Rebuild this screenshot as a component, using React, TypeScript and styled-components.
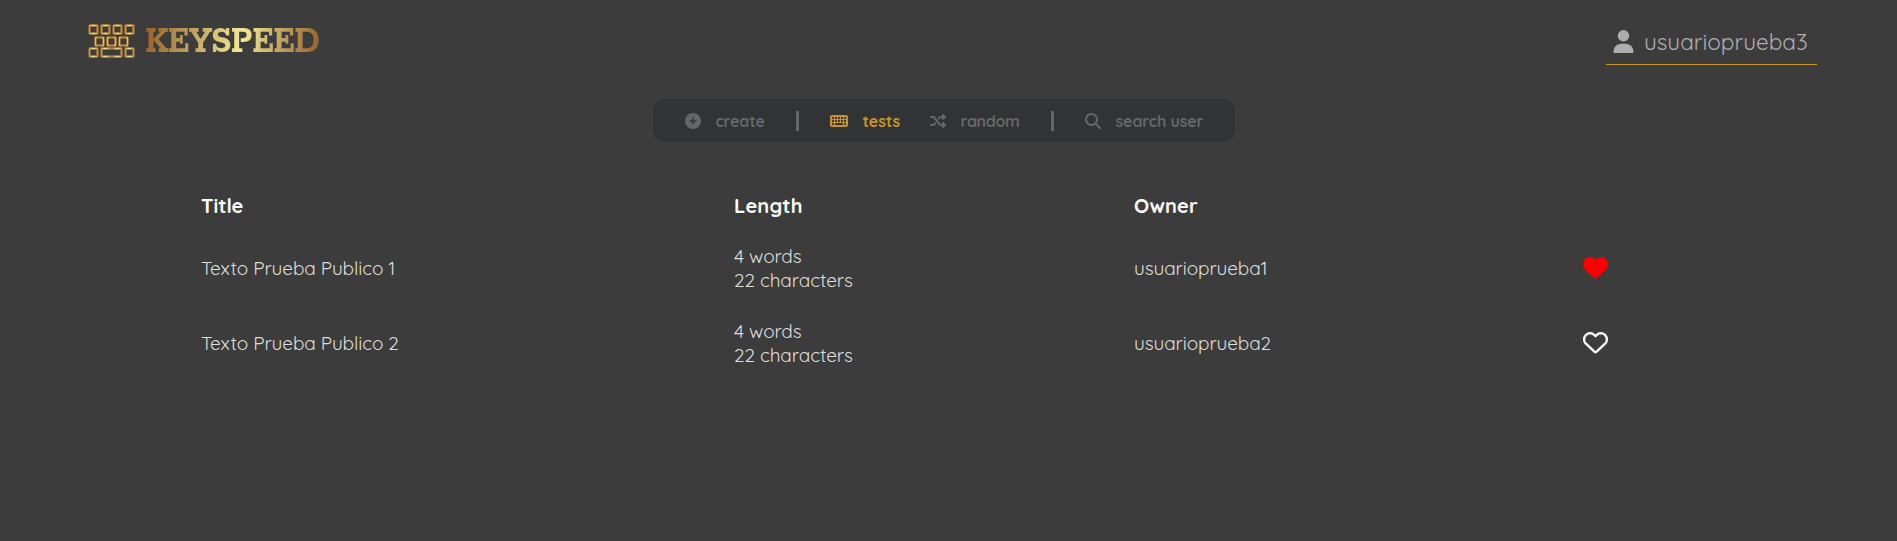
import React from "react";
import styled, { createGlobalStyle } from "styled-components";
import { FaCirclePlus, FaKeyboard, FaShuffle, FaMagnifyingGlass, FaUser, FaHeart, FaRegHeart } from "react-icons/fa6";

const GlobalStyle = createGlobalStyle`
  * { box-sizing: border-box; }
  body { margin: 0; background: #3c3c3c; font-family: Quicksand, Lato, "Open Sans", sans-serif; }
  svg { display: block; flex: none; }
`;

const Page = styled.div`
  min-height: 541px;
  overflow: hidden;
  background: #3c3c3c;
`;

const Header = styled.header`
  display: flex;
  justify-content: space-between;
  align-items: flex-start;
  height: 99px;
  padding: 17px 80px 0 88px;
`;

const Logo = styled.div`
  display: flex;
  align-items: center;
  gap: 9px;
  height: 48px;
`;

const LogoText = styled.span`
  margin-top: 4px;
  font: 700 36px/40px "Roboto Slab", Rokkitt, "Zilla Slab", "DejaVu Serif Condensed", "DejaVu Serif", serif;
  letter-spacing: -0.6px;
  transform: scaleY(1.14);
  color: transparent;
  background: linear-gradient(100deg, #99632c 2%, #c2a45e 28%, #f3e994 55%, #c2a45e 76%, #99632c 98%);
  background-clip: text;
  -webkit-background-clip: text;
`;

const UserLink = styled.div`
  display: flex;
  align-items: center;
  width: 211px;
  height: 48px;
  padding: 2px 0 0 6px;
  gap: 9px;
  border-bottom: 1px solid #c4942b;
  color: #adadad;
  font-size: 22.5px;
  line-height: 30px;
`;

const Label = styled.span<{ $spacing?: number }>`
  white-space: nowrap;
  letter-spacing: ${(p) => p.$spacing ?? 0}px;
`;

const Nav = styled.nav`
  display: flex;
  align-items: center;
  width: 582px;
  height: 43px;
  margin-left: 653px;
  padding-left: 32px;
  border-radius: 12px;
  background: #323335;
`;

const NavItem = styled.div<{ $width: number; $active?: boolean }>`
  display: flex;
  align-items: center;
  gap: 14.5px;
  flex: none;
  width: ${(p) => p.$width}px;
  color: ${(p) => (p.$active ? "#c4942b" : "#646669")};
  font-size: 16px;
  font-weight: 700;
  line-height: 20px;
`;

const KeyboardIcon = styled(FaKeyboard)`
  width: 18px;
  height: 16px;
`;

const Divider = styled.div<{ $after: number }>`
  flex: none;
  width: 3px;
  height: 20px;
  margin: 0 ${(p) => p.$after}px 0 0;
  background: #646669;
`;

const Table = styled.div`
  margin: 41px 0 0 201px;
`;

const Row = styled.div<{ $head?: boolean }>`
  display: grid;
  grid-template-columns: 533px 400px 449px 25px;
  align-items: center;
  height: ${(p) => (p.$head ? 45 : 75)}px;
  margin-bottom: ${(p) => (p.$head ? 2 : 0)}px;
  color: ${(p) => (p.$head ? "#ffffff" : "#dededb")};
  font-size: ${(p) => (p.$head ? 20 : 19)}px;
  font-weight: ${(p) => (p.$head ? 700 : 400)};
  line-height: 24px;
`;

const Cell = styled.div`
  display: flex;
  flex-direction: column;
  align-items: flex-start;
`;

const Favourite = styled.div<{ $liked: boolean }>`
  color: ${(p) => (p.$liked ? "#ff0000" : "#ffffff")};
  font-size: 25px;
`;

const KEYS = [
  [1, 1, 8], [13, 1, 8], [25, 1, 8], [37, 1, 8],
  [7, 13, 8], [19, 13, 8], [31, 13, 8],
  [1, 24, 8], [13, 24, 20], [37, 24, 8],
];

const KeyboardMark = () => (
  <svg width="48" height="35" viewBox="0 0 48 35" fill="none">
    <defs>
      <linearGradient id="gold" x1="0" y1="0" x2="12" y2="0" gradientUnits="userSpaceOnUse" spreadMethod="repeat">
        <stop offset="0" stopColor="#a5803f" />
        <stop offset=".45" stopColor="#f4e79c" />
        <stop offset=".9" stopColor="#a5803f" />
      </linearGradient>
    </defs>
    {KEYS.map(([x, y, w]) => (
      <g key={`${x}-${y}`}>
        <rect x={x + 0.5} y={y + 0.5} width={w} height="8" rx="0.6" stroke="#80602f" strokeWidth="2.8" />
        <rect x={x + 0.5} y={y + 0.5} width={w} height="8" rx="0.6" stroke="url(#gold)" strokeWidth="1.3" />
      </g>
    ))}
  </svg>
);

const TESTS = [
  { title: "Texto Prueba Publico 1", owner: "usuarioprueba1", liked: true },
  { title: "Texto Prueba Publico 2", owner: "usuarioprueba2", liked: false },
];

export default function App() {
  return (
    <Page>
      <GlobalStyle />
      <Header>
        <Logo>
          <KeyboardMark />
          <LogoText>KEYSPEED</LogoText>
        </Logo>
        <UserLink>
          <FaUser size={23} />
          <Label>usuarioprueba3</Label>
        </UserLink>
      </Header>
      <Nav>
        <NavItem $width={111}><FaCirclePlus size={16} /><Label $spacing={-0.2}>create</Label></NavItem>
        <Divider $after={31} />
        <NavItem $width={100} $active><KeyboardIcon /><Label $spacing={-0.1}>tests</Label></NavItem>
        <NavItem $width={121}><FaShuffle size={16} /><Label $spacing={-0.35}>random</Label></NavItem>
        <Divider $after={31} />
        <NavItem $width={118}><FaMagnifyingGlass size={16} /><Label $spacing={-0.15}>search user</Label></NavItem>
      </Nav>
      <Table>
        <Row $head>
          <Label>Title</Label>
          <Label $spacing={0.15}>Length</Label>
          <Label $spacing={0.2}>Owner</Label>
        </Row>
        {TESTS.map((t) => (
          <Row key={t.title}>
            <Label $spacing={-0.12}>{t.title}</Label>
            <Cell>
              <Label $spacing={-0.1}>4 words</Label>
              <Label $spacing={-0.1}>22 characters</Label>
            </Cell>
            <Label $spacing={-0.13}>{t.owner}</Label>
            <Favourite $liked={t.liked}>{t.liked ? <FaHeart /> : <FaRegHeart />}</Favourite>
          </Row>
        ))}
      </Table>
    </Page>
  );
}
